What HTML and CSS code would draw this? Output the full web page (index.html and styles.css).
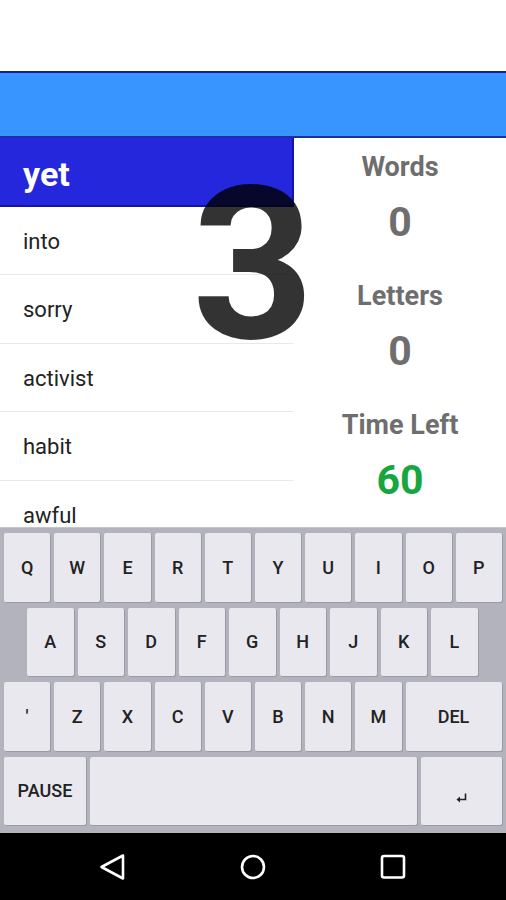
FILE: index.html
```html
<!DOCTYPE html>
<html lang="en">
<head>
    <meta charset="UTF-8">
    <meta name="viewport" content="width=device-width, initial-scale=1.0">
    <title>Word Typer</title>
    <link rel="stylesheet" href="styles.css">
</head>
<body>
    <div class="status-area"></div>
    <div class="toolbar"></div>

    <!-- Game area -->
    <div class="main">
        <div class="word-list">
            <div class="word current">yet</div>
            <div class="word">into</div>
            <div class="word">sorry</div>
            <div class="word">activist</div>
            <div class="word">habit</div>
            <div class="word">awful</div>
        </div>
        <div class="stats">
            <div class="stat">
                <div class="stat-label">Words</div>
                <div class="stat-value">0</div>
            </div>
            <div class="stat">
                <div class="stat-label">Letters</div>
                <div class="stat-value">0</div>
            </div>
            <div class="stat">
                <div class="stat-label">Time Left</div>
                <div class="stat-value time">60</div>
            </div>
        </div>
        <div class="countdown">3</div>
    </div>

    <!-- Keyboard -->
    <div class="keyboard">
        <div class="key-row">
            <div class="key">Q</div><div class="key">W</div><div class="key">E</div><div class="key">R</div><div class="key">T</div>
            <div class="key">Y</div><div class="key">U</div><div class="key">I</div><div class="key">O</div><div class="key">P</div>
        </div>
        <div class="key-row row-2">
            <div class="key">A</div><div class="key">S</div><div class="key">D</div><div class="key">F</div><div class="key">G</div>
            <div class="key">H</div><div class="key">J</div><div class="key">K</div><div class="key">L</div>
        </div>
        <div class="key-row">
            <div class="key">'</div><div class="key">Z</div><div class="key">X</div><div class="key">C</div><div class="key">V</div>
            <div class="key">B</div><div class="key">N</div><div class="key">M</div><div class="key key-del">DEL</div>
        </div>
        <div class="key-row">
            <div class="key key-pause">PAUSE</div>
            <div class="key key-space"></div>
            <div class="key key-enter">
                <svg width="11" height="10" viewBox="0 0 11 10">
                    <path d="M9.5 0.5 V6.5 H2" fill="none" stroke="#222" stroke-width="1.6"/>
                    <path d="M0.5 6.5 L4 3.5 V9.5 Z" fill="#222"/>
                </svg>
            </div>
        </div>
    </div>

    <!-- Navigation bar -->
    <div class="navbar">
        <svg width="28" height="28" viewBox="0 0 28 28">
            <path d="M24 2.5 L2.5 14 L24 25.5 Z" fill="none" stroke="#fff" stroke-width="2.6" stroke-linejoin="round"/>
        </svg>
        <svg width="28" height="28" viewBox="0 0 28 28">
            <circle cx="14" cy="14" r="11" fill="none" stroke="#fff" stroke-width="2.6"/>
        </svg>
        <svg width="28" height="28" viewBox="0 0 28 28">
            <rect x="3" y="3" width="22" height="21.5" rx="2" fill="none" stroke="#fff" stroke-width="2.6"/>
        </svg>
    </div>
</body>
</html>
```

FILE: styles.css
```css
body {
    margin: 0;
    width: 506px;
    height: 900px;
    overflow: hidden;
    font-family: Roboto, "Liberation Sans", sans-serif;
    background: #fff;
}

.status-area {
    height: 71px;
    background: #fff;
}

.toolbar {
    height: 63px;
    background: #3894fe;
    border-top: 2px solid #1a1f96;
    border-bottom: 2px solid #1c2ea6;
}

.main {
    display: flex;
    height: 389px;
    overflow: hidden;
    position: relative;
}

.word-list {
    width: 294px;
    flex-shrink: 0;
}

.word {
    height: 65.5px;
    line-height: 65.5px;
    padding-top: 2px;
    padding-left: 23px;
    font-size: 22px;
    color: #222;
    border-bottom: 1px solid #e8e8e8;
    margin-right: 1px;
}

.word.current {
    height: 60.5px;
    line-height: 60.5px;
    padding-top: 6px;
    margin-right: 0;
    background: #2427dc;
    color: #fff;
    font-weight: bold;
    font-size: 34px;
    border-bottom: 2px solid #1414a8;
    border-right: 2px solid #1414a8;
}

.stats {
    flex: 1;
    padding-top: 13px;
    text-align: center;
    color: #6e6e6e;
    font-weight: bold;
}

.stat + .stat {
    margin-top: 33.5px;
}

.stat-label {
    font-size: 27px;
    line-height: 32px;
}

.stat-value {
    margin-top: 13.5px;
    font-size: 41px;
    line-height: 50px;
}

.stat-value.time {
    color: #17a63e;
}

/* big countdown number over everything */
.countdown {
    position: absolute;
    top: 20px;
    left: 0;
    right: 0;
    text-align: center;
    font-size: 213px;
    line-height: 215px;
    font-weight: bold;
    color: rgba(0, 0, 0, 0.8);
}

.keyboard {
    height: 306px;
    box-sizing: border-box;
    padding: 5px 0 7px;
    background: #b2b3bd;
    border-top: 1px solid #c4c4cc;
    display: flex;
    flex-direction: column;
    gap: 6px;
}

.key-row {
    display: flex;
    gap: 4px;
    padding-left: 4px;
    height: 68.5px;
}

.row-2 {
    padding-left: 27px;
}

.key {
    width: 46.2px;
    flex-shrink: 0;
    background: #e8e8ee;
    border-radius: 2px;
    box-shadow: 1px 1px 0 #9a9ba5;
    display: flex;
    align-items: center;
    justify-content: center;
    font-size: 18px;
    font-weight: 500;
    color: #222;
}

.row-2 .key {
    width: 46.5px;
}

.key-del {
    width: 96px;
}

.key-pause {
    width: 82px;
}

.key-space {
    width: 327px;
}

.key-enter {
    width: 81px;
    padding-top: 14px;
    box-sizing: border-box;
}

.navbar {
    height: 67px;
    background: #000;
    display: flex;
    align-items: center;
    justify-content: center;
    gap: 112px;
}
```
